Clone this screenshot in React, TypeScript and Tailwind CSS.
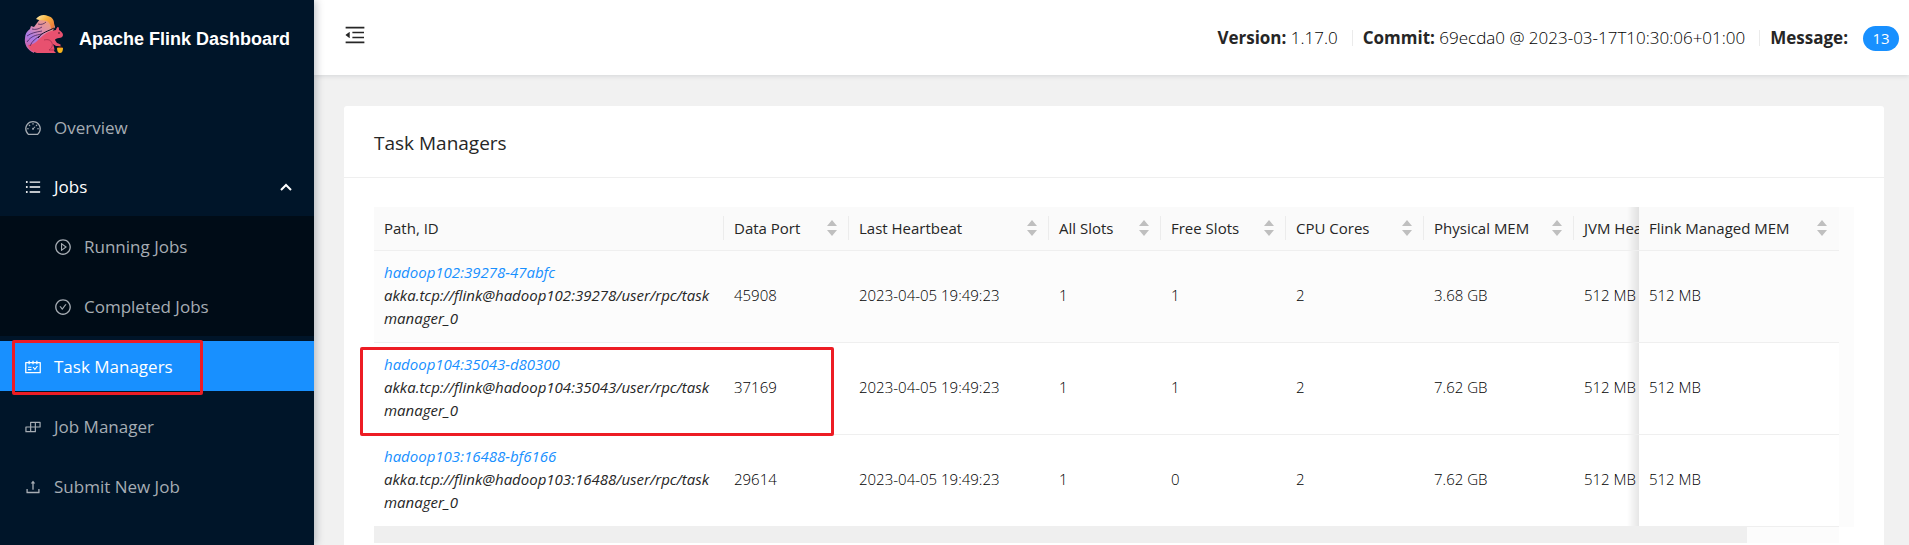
import React from "react";
import {
  AiOutlineBars,
  AiOutlineBuild,
  AiOutlineCheckCircle,
  AiOutlineDashboard,
  AiOutlineMenuFold,
  AiOutlinePlayCircle,
  AiOutlineSchedule,
  AiOutlineUpload,
} from "react-icons/ai";
import type { IconType } from "react-icons";

type Manager = {
  id: string;
  path: string;
  port: string;
  heartbeat: string;
  slots: string;
  free: string;
  cores: string;
  physical: string;
  heap: string;
  managed: string;
};

const managers: Manager[] = [
  {
    id: "hadoop102:39278-47abfc",
    path: "akka.tcp://flink@hadoop102:39278/user/rpc/taskmanager_0",
    port: "45908",
    heartbeat: "2023-04-05 19:49:23",
    slots: "1",
    free: "1",
    cores: "2",
    physical: "3.68 GB",
    heap: "512 MB",
    managed: "512 MB",
  },
  {
    id: "hadoop104:35043-d80300",
    path: "akka.tcp://flink@hadoop104:35043/user/rpc/taskmanager_0",
    port: "37169",
    heartbeat: "2023-04-05 19:49:23",
    slots: "1",
    free: "1",
    cores: "2",
    physical: "7.62 GB",
    heap: "512 MB",
    managed: "512 MB",
  },
  {
    id: "hadoop103:16488-bf6166",
    path: "akka.tcp://flink@hadoop103:16488/user/rpc/taskmanager_0",
    port: "29614",
    heartbeat: "2023-04-05 19:49:23",
    slots: "1",
    free: "0",
    cores: "2",
    physical: "7.62 GB",
    heap: "512 MB",
    managed: "512 MB",
  },
];

const columns = [
  { label: "Data Port", width: "w-[125px]" },
  { label: "Last Heartbeat", width: "w-[200px]" },
  { label: "All Slots", width: "w-[112px]" },
  { label: "Free Slots", width: "w-[125px]" },
  { label: "CPU Cores", width: "w-[138px]" },
  { label: "Physical MEM", width: "w-[150px]" },
  { label: "JVM Heap Size", width: "w-[163px]" },
];

function Squirrel() {
  return (
    <svg viewBox="0 0 40 40" className="mb-[10px] size-10 shrink-0" aria-hidden="true">
      <defs>
        <linearGradient id="tail" x1="0.8" y1="0" x2="0.2" y2="1">
          <stop offset="0" stopColor="#f2a07a" />
          <stop offset="0.4" stopColor="#d98bb4" />
          <stop offset="0.65" stopColor="#a77be6" />
          <stop offset="1" stopColor="#d95f9c" />
        </linearGradient>
        <linearGradient id="tip" x1="0" y1="0" x2="1" y2="0.8">
          <stop offset="0" stopColor="#fff0b8" />
          <stop offset="0.45" stopColor="#f9b53f" />
          <stop offset="1" stopColor="#e8743c" />
        </linearGradient>
      </defs>
      <path
        d="M10 39C3 36 0 30 1 24c0-4 2-7 5-9l1-3 3 1 3-4 3-4 12 0 3 8-3 5c-3 3-7 4-10 6-5 3-8 9-8 15z"
        fill="url(#tail)"
      />
      <path d="M12 5c3-4 8-5 12-3 4 1 6 4 6 7 1 3 0 5-3 7 0-4-1-7-4-9-3-1-7 0-11-2z" fill="url(#tip)" />
      <path
        d="M34 13c1 0 1 2 1 3 2 1 4 3 4 5s-2 3-4 3c-2 0-4 1-4 2l2 3c2 1 3 1 4 2l-1 1-4 0-3-2c1 3 2 5 1 7l2 2H13c-4-1-8-3-9-8 3 0 6-1 8-3 5-5 9-9 15-11l5-1c0-1 1-3 2-3z"
        fill="#e8516f"
      />
      <path d="M20 26c4-1 7 0 8 3 1 2 0 5-3 7h5" fill="none" stroke="#a52c4b" strokeWidth="0.8" />
      <path
        d="M3 22c4-3 9-4 15-5M3 28c4-6 9-7 15-8M6 32c2-5 6-8 10-10M8 15c3 1 7 0 10-2M14 10c3 1 6 0 8-2"
        fill="none"
        stroke="#35174f"
        strokeWidth="0.7"
      />
      <path d="M14 24c4-6 11-7 16-10" fill="none" stroke="#140d24" strokeWidth="1" />
      <circle cx="35" cy="19" r="0.8" fill="#2a0f1c" />
      <path d="M33 34h6c0 3-1 5-3 5s-3-2-3-5z" fill="#f5b21d" />
      <path d="M33 34c1-2 5-2 6 0z" fill="#8a431b" />
    </svg>
  );
}

function MenuItem({
  icon: Icon,
  label,
  nested = false,
  active = false,
  marked = false,
}: {
  icon: IconType;
  label: string;
  nested?: boolean;
  active?: boolean;
  marked?: boolean;
}) {
  return (
    <li>
      <a
        href="#"
        className={`relative flex h-[50px] items-center gap-3 pt-px ${nested ? "pl-[54px]" : "pl-6"} ${
          active ? "bg-[#1890ff] text-white" : "text-[#a6adb4]"
        }`}
      >
        <Icon className="size-[18px] shrink-0" />
        <span>{label}</span>
        {marked && (
          <span className="pointer-events-none absolute -top-px left-3 h-[55px] w-[191px] rounded-[2px] border-3 border-[#ed1c24]" />
        )}
      </a>
    </li>
  );
}

function SortCarets() {
  return (
    <svg viewBox="0 0 10 16" className="h-4 w-[10px] shrink-0 fill-[#bfbfbf]" aria-hidden="true">
      <path d="M5 0l5 6H0zM5 16l5-6H0z" />
    </svg>
  );
}

function HeaderCell({ label, width }: { label: string; width: string }) {
  return (
    <th className={`${width} h-11 border-b border-[#efefef] bg-[#fafafa] pt-[9px] pb-[10px] pl-[10px] text-left font-normal`}>
      <button className="flex h-6 w-full items-center justify-between border-r border-[#ececec] pr-[11px] text-left">
        <span className="whitespace-nowrap">{label}</span>
        <SortCarets />
      </button>
    </th>
  );
}

export default function App() {
  const stickyShadow =
    "sticky right-0 before:pointer-events-none before:absolute before:inset-y-0 before:-left-3 before:w-3 before:bg-linear-to-l before:from-black/10 before:to-transparent";
  return (
    <div className="flex h-screen overflow-hidden bg-[#f1f1f1] font-['Open_Sans','Noto_Sans',sans-serif] text-[#262626]">
      <aside className="relative z-20 w-[314px] shrink-0 bg-[#001529] text-[17px] shadow-[2px_0_8px_rgba(0,21,41,0.25)]">
        <a href="#" className="flex h-[78px] items-center gap-[15px] pl-6 text-white">
          <Squirrel />
          <h1 className="font-['Liberation_Sans',Arial,sans-serif] text-[18px] font-bold">
            Apache Flink Dashboard
          </h1>
        </a>
        <nav aria-label="Main">
          <ul className="flex flex-col gap-[10px] pt-6">
            <MenuItem icon={AiOutlineDashboard} label="Overview" />
            <li className="flex flex-col gap-1">
              <button className="flex h-[50px] items-center gap-3 pr-[22px] pl-6 text-white">
                <AiOutlineBars className="size-[18px]" />
                <span>Jobs</span>
                <svg viewBox="0 0 12 8" className="ml-auto h-2 w-3 fill-none stroke-white stroke-2" aria-hidden="true">
                  <path d="M1 7l5-5 5 5" />
                </svg>
              </button>
              <ul className="-mb-[5px] flex flex-col gap-[10px] bg-[#000c17] py-[5px]">
                <MenuItem icon={AiOutlinePlayCircle} label="Running Jobs" nested />
                <MenuItem icon={AiOutlineCheckCircle} label="Completed Jobs" nested />
              </ul>
            </li>
            <MenuItem icon={AiOutlineSchedule} label="Task Managers" active marked />
            <MenuItem icon={AiOutlineBuild} label="Job Manager" />
            <MenuItem icon={AiOutlineUpload} label="Submit New Job" />
          </ul>
        </nav>
      </aside>

      <div className="flex min-w-0 flex-1 flex-col">
        <header className="relative z-10 flex h-[75px] shrink-0 items-center justify-between bg-white pr-[10px] pl-[29px] shadow-[0_1px_5px_rgba(0,21,41,0.12)]">
          <button aria-label="Collapse menu" className="-mt-[6px]">
            <AiOutlineMenuFold className="size-6" />
          </button>
          <div className="flex items-center text-[17px] font-light text-black">
            <span>
              <strong className="font-bold text-[#262626]">Version:</strong> 1.17.0
            </span>
            <span className="mr-[10px] ml-[14px] h-4 w-px bg-[#ebebeb]" />
            <span>
              <strong className="font-bold text-[#262626]">Commit:</strong> 69ecda0 @ 2023-03-17T10:30:06+01:00
            </span>
            <span className="mr-[10px] ml-[14px] h-4 w-px bg-[#ebebeb]" />
            <strong className="font-bold text-[#262626]">Message:</strong>
            <button className="mt-px ml-[15px] h-[25px] w-9 rounded-full bg-[#1890ff] text-[15px] font-normal text-white">
              13
            </button>
          </div>
        </header>

        <main className="min-h-0 flex-1 px-[30px] pt-[31px] pr-[25px]">
          <section className="rounded-[3px] bg-white">
            <div className="flex h-[72px] items-center border-b border-[#efefef] px-[30px] pt-[3px]">
              <h2 className="text-[19px]">Task Managers</h2>
            </div>
            <div className="relative p-[30px] pt-[29px] text-[15px]">
              <div className="bg-[#fcfcfc] pr-[15px]">
                <div className="overflow-x-auto [scrollbar-width:none]">
                  <table className="w-full min-w-[1563px] table-fixed border-separate border-spacing-0">
                    <thead>
                      <tr>
                        <th className="h-11 w-[350px] border-b border-[#efefef] bg-[#fafafa] pt-[9px] pb-[10px] pl-[10px] text-left font-normal">
                          <div className="flex h-6 items-center border-r border-[#ececec]">Path, ID</div>
                        </th>
                        {columns.map((column) => (
                          <HeaderCell key={column.label} label={column.label} width={column.width} />
                        ))}
                        <th
                          className={`${stickyShadow} w-[200px] border-b border-[#efefef] bg-[#fafafa] pt-[9px] pr-[12px] pb-[10px] pl-[10px] text-left font-normal`}
                        >
                          <button className="flex h-6 w-full items-center justify-between text-left">
                            <span className="whitespace-nowrap">Flink Managed MEM</span>
                            <SortCarets />
                          </button>
                        </th>
                      </tr>
                    </thead>
                    <tbody className="leading-[23px] [&_td]:border-b [&_td]:border-[#efefef] [&_td]:px-[10px] [&_td]:pt-[10px] [&_td]:pb-3">
                      {managers.map((row, index) => (
                        <tr
                          key={row.id}
                          className={`font-light text-black ${index === 0 ? "[&_td]:bg-[#fcfcfc]" : "[&_td]:bg-white"}`}
                        >
                          <td className="font-normal break-all text-[#262626] italic">
                            <a href="#" className="block text-[#1890ff]">
                              {row.id}
                            </a>
                            {row.path}
                          </td>
                          <td>{row.port}</td>
                          <td>{row.heartbeat}</td>
                          <td>{row.slots}</td>
                          <td>{row.free}</td>
                          <td>{row.cores}</td>
                          <td>{row.physical}</td>
                          <td>{row.heap}</td>
                          <td className={stickyShadow}>{row.managed}</td>
                        </tr>
                      ))}
                    </tbody>
                  </table>
                </div>
              </div>
              <div className="mr-[15px] h-4 bg-[#fcfcfc]">
                <div className="h-full w-15/16 bg-[#efefef]" />
              </div>
              <span className="pointer-events-none absolute top-[169px] left-4 h-[89px] w-[474px] rounded-[2px] border-3 border-[#ed1c24]" />
            </div>
          </section>
        </main>
      </div>
    </div>
  );
}
